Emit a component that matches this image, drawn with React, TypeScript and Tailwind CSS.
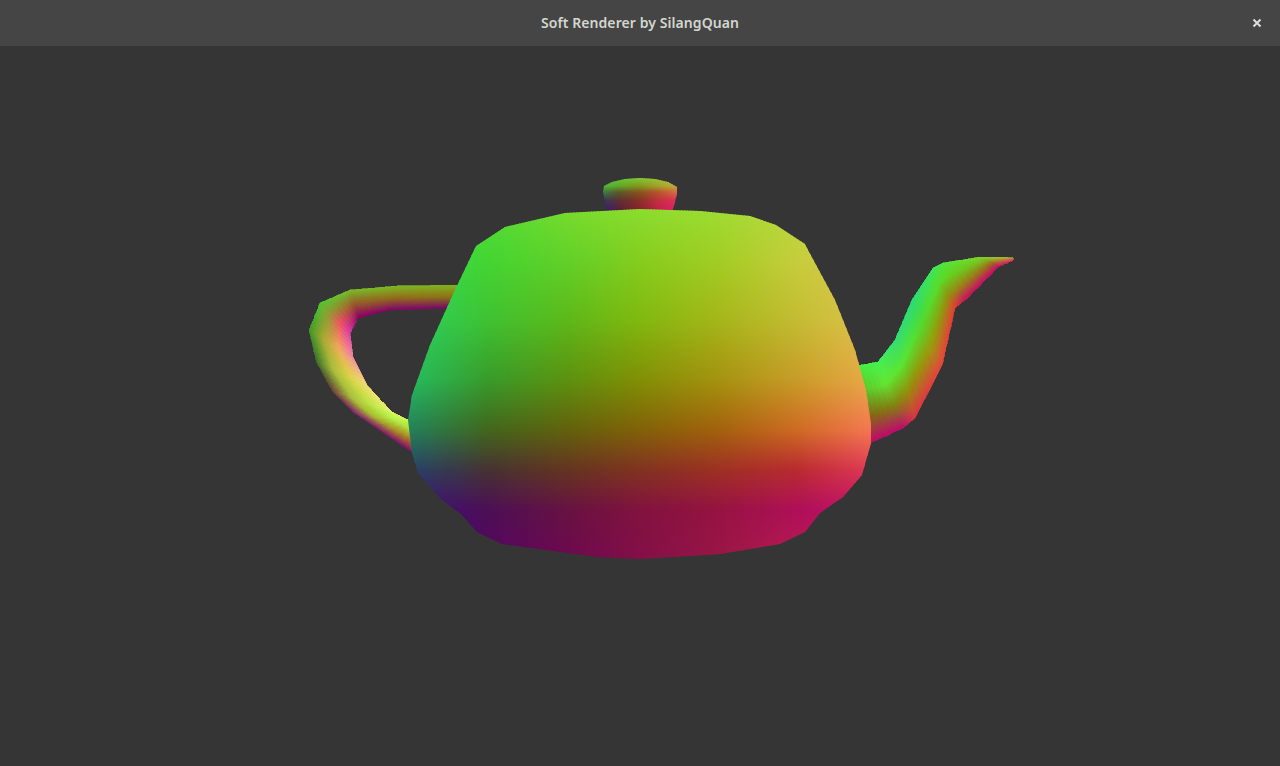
type RGB = [number, number, number];
type Pt = [number, number];

const mix = (a: number, b: number, t: number) => a + (b - a) * t;
const mixRgb = (a: RGB, b: RGB, t: number): RGB => [mix(a[0], b[0], t), mix(a[1], b[1], t), mix(a[2], b[2], t)];
const css = (c: RGB) => `rgb(${Math.round(c[0])},${Math.round(c[1])},${Math.round(c[2])})`;

// sample a list of evenly spaced colours at t in 0..1
function ramp(colors: RGB[], t: number): RGB {
	const p = Math.min(t, 0.9999) * (colors.length - 1);
	const i = Math.floor(p);
	return mixRgb(colors[i], colors[i + 1], p - i);
}

const bodyOutline =
	"408,420 412,453 418,473 440,498 462,515 477,532 502,544 597,557 640,559 720,554 780,544 805,532 820,513 843,497 862,475 867,457 873,437 866,390 855,350 835,300 808,250 805,244 776,225 750,216 700,211 640,209 565,213 505,227 476,246 455,290 430,345 412,395";

const lidOutline =
	"603,192 604,186 612,182 625,179 640,178 655,179 668,182 677,187 677,193 675,202 672,212 607,212 605,202";

const bodyCols = [410, 490, 570, 640, 720, 800, 870];
const bodyRows = [210, 260, 320, 380, 430, 470, 510, 560];
const bodyGrid: RGB[][] = [
	[[55, 225, 70], [82, 220, 52], [118, 220, 45], [138, 220, 45], [158, 220, 50], [188, 215, 60], [218, 203, 75]],
	[[45, 222, 85], [68, 213, 50], [98, 208, 40], [132, 205, 30], [162, 205, 35], [198, 205, 60], [223, 198, 80]],
	[[40, 210, 95], [63, 194, 50], [93, 184, 25], [128, 184, 15], [165, 182, 25], [196, 188, 50], [220, 195, 75]],
	[[38, 188, 95], [56, 155, 42], [93, 145, 15], [128, 143, 5], [165, 146, 15], [200, 156, 40], [232, 168, 70]],
	[[35, 128, 90], [66, 102, 28], [98, 97, 12], [128, 97, 8], [162, 97, 12], [206, 106, 35], [243, 118, 80]],
	[[38, 65, 105], [70, 50, 50], [100, 52, 32], [128, 50, 32], [157, 48, 35], [186, 42, 48], [222, 55, 85]],
	[[58, 15, 125], [76, 15, 85], [103, 18, 65], [128, 18, 62], [150, 18, 65], [175, 15, 88], [198, 15, 108]],
	[[70, 0, 130], [85, 5, 98], [110, 8, 80], [130, 15, 72], [153, 22, 70], [183, 28, 80], [203, 20, 110]],
];

const lidCols = [600, 620, 640, 660, 680];
const lidRows = [178, 186, 192, 200, 212];
const lidGrid: RGB[][] = [
	[[90, 200, 50], [100, 200, 50], [125, 200, 50], [150, 200, 50], [170, 200, 60]],
	[[70, 190, 60], [95, 170, 40], [125, 150, 30], [165, 160, 40], [190, 170, 60]],
	[[50, 140, 70], [90, 90, 40], [130, 85, 30], [180, 85, 40], [220, 110, 70]],
	[[40, 60, 110], [90, 50, 50], [130, 50, 35], [190, 50, 60], [225, 50, 90]],
	[[30, 20, 150], [90, 25, 70], [135, 30, 40], [200, 25, 80], [240, 20, 120]],
];

type Station = { a: Pt; b: Pt; colors: RGB[] };

const handle: Station[] = [
	{ a: [462, 285], b: [452, 308], colors: [[130, 175, 30], [140, 120, 20], [120, 10, 100]] },
	{ a: [397, 286], b: [390, 310], colors: [[125, 185, 35], [145, 110, 25], [130, 5, 105]] },
	{ a: [350, 290], b: [358, 318], colors: [[120, 190, 40], [150, 90, 40], [140, 0, 100]] },
	{ a: [320, 303], b: [350, 333], colors: [[80, 200, 50], [150, 150, 50], [240, 80, 100], [220, 60, 170]] },
	{ a: [309, 330], b: [353, 357], colors: [[60, 150, 40], [170, 170, 50], [240, 170, 90], [240, 130, 170]] },
	{ a: [317, 363], b: [367, 385], colors: [[60, 110, 40], [170, 190, 60], [220, 210, 70], [240, 220, 120]] },
	{ a: [333, 392], b: [392, 412], colors: [[110, 60, 60], [170, 190, 60], [190, 230, 70], [230, 240, 110]] },
	{ a: [353, 412], b: [408, 420], colors: [[130, 30, 110], [170, 190, 50], [180, 240, 70], [210, 250, 90]] },
	{ a: [413, 453], b: [416, 420], colors: [[130, 10, 110], [170, 110, 30], [175, 220, 60], [190, 245, 75]] },
];

const spout: Station[] = [
	{ a: [855, 366], b: [868, 444], colors: [[70, 240, 60], [90, 190, 40], [130, 100, 20], [190, 10, 100]] },
	{ a: [878, 362], b: [903, 428], colors: [[70, 240, 80], [100, 230, 50], [130, 130, 15], [190, 10, 110]] },
	{ a: [895, 340], b: [915, 418], colors: [[50, 220, 120], [90, 230, 50], [150, 140, 10], [220, 50, 70]] },
	{ a: [912, 300], b: [942, 365], colors: [[40, 220, 120], [80, 220, 50], [150, 160, 10], [230, 70, 60]] },
	{ a: [933, 268], b: [955, 308], colors: [[60, 230, 90], [90, 220, 40], [140, 150, 15], [230, 60, 50]] },
	{ a: [943, 263], b: [965, 300], colors: [[80, 230, 60], [100, 210, 30], [150, 140, 20], [200, 20, 90]] },
	{ a: [980, 257], b: [998, 267], colors: [[120, 220, 40], [130, 180, 30], [160, 100, 30], [200, 10, 110]] },
	{ a: [1013, 258], b: [1013, 260], colors: [[190, 170, 60], [200, 120, 70], [220, 60, 90]] },
];

// a tube drawn as a strip of small flat polygons, colours interpolated across and along
function Tube({ stations, along = 6, across = 28 }: { stations: Station[]; along?: number; across?: number }) {
	const at = (s: number, u: number, v: number) => {
		const s0 = stations[s];
		const s1 = stations[s + 1];
		const a: Pt = [mix(s0.a[0], s1.a[0], u), mix(s0.a[1], s1.a[1], u)];
		const b: Pt = [mix(s0.b[0], s1.b[0], u), mix(s0.b[1], s1.b[1], u)];
		return `${mix(a[0], b[0], v).toFixed(1)},${mix(a[1], b[1], v).toFixed(1)}`;
	};
	const cells = [];
	for (let s = 0; s < stations.length - 1; s++) {
		for (let i = 0; i < along; i++) {
			for (let j = 0; j < across; j++) {
				const u0 = i / along;
				const u1 = (i + 1) / along;
				const v0 = j / across;
				const v1 = (j + 1) / across;
				const c = css(
					mixRgb(
						ramp(stations[s].colors, (v0 + v1) / 2),
						ramp(stations[s + 1].colors, (v0 + v1) / 2),
						(u0 + u1) / 2,
					),
				);
				cells.push(
					<polygon
						key={`${s}-${i}-${j}`}
						points={`${at(s, u0, v0)} ${at(s, u1, v0)} ${at(s, u1, v1)} ${at(s, u0, v1)}`}
						fill={c}
						stroke={c}
						strokeWidth={0.7}
					/>,
				);
			}
		}
	}
	return <g shapeRendering="crispEdges">{cells}</g>;
}

// clipped column strips, each with a vertical gradient read from a colour grid
function Shaded({ id, outline, cols, rows, grid, step }: { id: string; outline: string; cols: number[]; rows: number[]; grid: RGB[][]; step: number }) {
	const xs: number[] = [];
	for (let x = cols[0]; x < cols[cols.length - 1]; x += step) xs.push(x);
	const top = rows[0];
	const bottom = rows[rows.length - 1];
	const colorAt = (row: number, x: number): RGB => {
		let i = 0;
		while (i < cols.length - 2 && x > cols[i + 1]) i++;
		return mixRgb(grid[row][i], grid[row][i + 1], (x - cols[i]) / (cols[i + 1] - cols[i]));
	};
	return (
		<g>
			<defs>
				<clipPath id={`${id}-clip`}>
					<polygon points={outline} />
				</clipPath>
				{xs.map((x) => (
					<linearGradient key={x} id={`${id}-${x}`} gradientUnits="userSpaceOnUse" x1="0" y1={top} x2="0" y2={bottom}>
						{rows.map((y, r) => (
							<stop key={y} offset={(y - top) / (bottom - top)} stopColor={css(colorAt(r, x + step / 2))} />
						))}
					</linearGradient>
				))}
			</defs>
			<g clipPath={`url(#${id}-clip)`} shapeRendering="crispEdges">
				{xs.map((x) => (
					<rect key={x} x={x - 2} y={top - 2} width={step + 0.5} height={bottom - top + 4} fill={`url(#${id}-${x})`} />
				))}
			</g>
		</g>
	);
}

export default function App() {
	return (
		<div className="flex h-[766px] w-[1280px] flex-col overflow-hidden bg-[#353535]">
			<header className="relative flex h-[46px] shrink-0 items-center justify-center bg-[#454545] pb-px">
				<span className="text-[14px] font-semibold tracking-[0.08px] text-[#d3d7cf] font-['Noto_Sans',sans-serif]">
					Soft Renderer by SilangQuan
				</span>
				<button className="absolute right-[18px] top-[18px] flex h-[10px] w-[10px] items-center justify-center">
					<svg width="10" height="10" viewBox="0 0 10 10">
						<path d="M1.5 1.5 L8.5 8.5 M8.5 1.5 L1.5 8.5" stroke="#dcdcdc" strokeWidth="2" />
					</svg>
				</button>
			</header>
			<main className="flex-1">
				<svg width="1280" height="720" viewBox="0 46 1280 720" className="block">
					<Tube stations={handle} />
					<Tube stations={spout} />
					<Shaded id="lid" outline={lidOutline} cols={lidCols} rows={lidRows} grid={lidGrid} step={2} />
					<Shaded id="body" outline={bodyOutline} cols={bodyCols} rows={bodyRows} grid={bodyGrid} step={3} />
				</svg>
			</main>
		</div>
	);
}
